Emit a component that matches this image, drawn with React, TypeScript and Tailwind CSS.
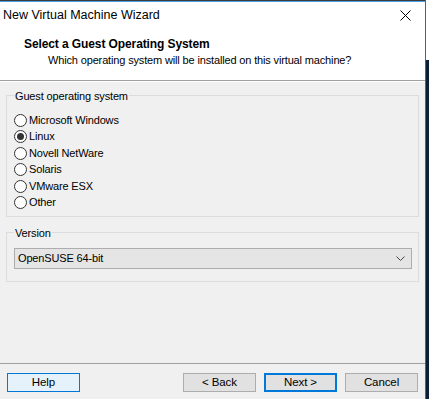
import React from "react";

const font = { fontFamily: '"Segoe UI", "Liberation Sans", Arial, sans-serif' };

function Radio({ label, checked }: { label: string; checked?: boolean }) {
  return (
    <div className="flex items-center h-[16.5px]">
      <div className="w-[13px] h-[13px] rounded-full border border-[#333333] bg-white flex items-center justify-center shrink-0">
        {checked && <div className="w-[7px] h-[7px] rounded-full bg-[#333333]" />}
      </div>
      <span className="ml-[2px] text-[11px] tracking-[-0.15px] text-black leading-none">{label}</span>
    </div>
  );
}

function Btn({ label, kind }: { label: string; kind: "help" | "normal" | "default" }) {
  const cls =
    kind === "help"
      ? "bg-[#e5f1fb] border border-[#0078d7]"
      : kind === "default"
      ? "bg-[#e1e1e1] border-2 border-[#0078d7]"
      : "bg-[#e1e1e1] border border-[#adadad]";
  return (
    <div className={`w-[73px] h-[19px] flex items-center justify-center text-[11.5px] tracking-[-0.1px] text-black ${cls}`}>
      {label}
    </div>
  );
}

export default function App() {
  return (
    <div className="w-[429px] h-[399px] flex overflow-hidden" style={font}>
      <div className="w-[425px] h-full flex flex-col bg-[#f0f0f0]">
        <div className="h-px bg-[#3c3c3c]" />
        <div className="h-px bg-[#4a9ee0]" />
        <div className="bg-white h-[78px] flex flex-col">
          <div className="h-[27px] flex items-center justify-between pl-[3px] pr-[14px]">
            <span className="text-[12.5px] text-black">New Virtual Machine Wizard</span>
            <svg width="11" height="11" viewBox="0 0 11 11">
              <path d="M0.5 0.5 L10.5 10.5 M10.5 0.5 L0.5 10.5" stroke="#000" strokeWidth="1" />
            </svg>
          </div>
          <div className="pl-[24px] pt-[8px] text-[12px] font-bold text-black leading-[14px] tracking-[-0.1px]">
            Select a Guest Operating System
          </div>
          <div className="pl-[48px] pt-[2px] text-[11px] tracking-[-0.15px] text-black leading-[14px]">
            Which operating system will be installed on this virtual machine?
          </div>
        </div>
        <div className="h-px bg-[#a0a0a0]" />
        <div className="h-px bg-white" />
        <div className="px-[6px] pt-[13px] flex flex-col">
          <div className="relative border border-[#dcdcdc] h-[122px] pt-[16px] pl-[7px]">
            <span className="absolute left-[7px] -top-[7px] px-[1px] bg-[#f0f0f0] text-[11px] tracking-[-0.15px] text-black leading-[14px]">
              Guest operating system
            </span>
            <Radio label="Microsoft Windows" />
            <Radio label="Linux" checked />
            <Radio label="Novell NetWare" />
            <Radio label="Solaris" />
            <Radio label="VMware ESX" />
            <Radio label="Other" />
          </div>
          <div className="relative border border-[#dcdcdc] h-[50px] mt-[15px] pt-[15px] px-[7px]">
            <span className="absolute left-[7px] -top-[7px] px-[1px] bg-[#f0f0f0] text-[11px] tracking-[-0.15px] text-black leading-[14px]">
              Version
            </span>
            <div className="h-[21px] w-[398px] bg-[#e5e5e5] border border-[#adadad] flex items-center justify-between pl-[3px] pr-[6px]">
              <span className="text-[11px] tracking-[-0.15px] text-black">OpenSUSE 64-bit</span>
              <svg width="9" height="5" viewBox="0 0 9 5">
                <path d="M0.5 0.5 L4.5 4.5 L8.5 0.5" stroke="#444" fill="none" strokeWidth="1" />
              </svg>
            </div>
          </div>
        </div>
        <div className="flex-1" />
        <div className="h-px bg-[#a0a0a0]" />
        <div className="h-[35px] flex items-start pt-[9px] pl-[7px] pr-[7px]">
          <Btn label="Help" kind="help" />
          <div className="flex-1" />
          <div className="flex gap-[8px]">
            <Btn label="< Back" kind="normal" />
            <Btn label="Next >" kind="default" />
            <Btn label="Cancel" kind="normal" />
          </div>
        </div>
      </div>
      <div className="w-px h-full bg-[#1e6fc0]" />
      <div className="flex-1 h-full flex flex-col">
        <div className="h-[60px] bg-white" />
        <div className="flex-1 bg-[#0d1f36]" />
      </div>
    </div>
  );
}
